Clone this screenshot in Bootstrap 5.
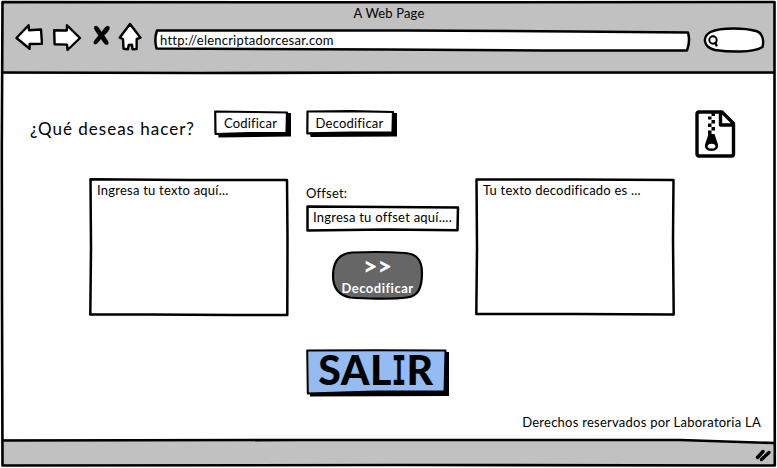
<!DOCTYPE html>
<html lang="es">
<head>
<meta charset="utf-8">
<meta name="viewport" content="width=device-width, initial-scale=1">
<title>A Web Page</title>
<link href="https://cdn.jsdelivr.net/npm/bootstrap@5.3.0/dist/css/bootstrap.min.css" rel="stylesheet">
<style>
  body { font-family: Lato, "Open Sans", sans-serif; font-size: 13px; line-height: 16px; color: #000; }
  .browser { width: 777px; height: 468px; background: #fff; }
  .chrome { background: #c1c1c1; height: 72px; margin: 2px 2px 0 3px; }
  .statusbar { background: #c1c1c1; height: 27px; margin: 0 3px 2px 3px; }
  .ink { position: absolute; left: 0; top: 0; fill: none; stroke: #000; stroke-linejoin: round; stroke-linecap: round; pointer-events: none; overflow: visible; }
  .page-title { padding-top: 3px; letter-spacing: .15px; }
  .toolbar { height: 33px; padding-left: 12px; margin-top: 1px; }
  .icon { fill: #fff; stroke: #000; stroke-width: 2.4; stroke-linejoin: round; stroke-linecap: round; flex: none; }
  .address { width: 537px; height: 32px; margin-left: 12px; }
  .address > span { padding: 10px 0 0 6px; letter-spacing: .22px; }
  .finder { margin-left: 12px; }
  .content { height: 367px; padding: 36px 0 0 30px; }
  .actions { height: 68px; }
  .question { font-size: 17px; line-height: 20px; width: 184px; padding-top: 9px; letter-spacing: 1px; white-space: nowrap; }
  .sketch-btn { background: none; border: 0; border-radius: 0; padding: 0; color: #000; font-size: 13px; line-height: 16px; }
  .choice { height: 28px; padding-bottom: 2px; letter-spacing: .2px; }
  .choice-a { width: 77px; padding-right: 4px; margin-right: 15px; }
  .choice-b { width: 91px; padding-right: 4px; }
  .zip { margin-left: 298px; }
  .workspace { height: 171px; margin-left: 59px; }
  .pane { width: 200px; height: 138px; }
  .pane textarea { resize: none; width: 200px; height: 138px; padding: 4px 8px; font-size: 13px; line-height: 16px; letter-spacing: .23px; color: #000; }
  .middle { width: 153px; margin: 0 16px 0 17px; }
  .middle label { padding-top: 7px; line-height: 16px; height: 27px; letter-spacing: .2px; }
  .offset-box { height: 27px; }
  .offset-box input { height: 27px; padding: 0 0 3px 7px; font-size: 13px; letter-spacing: .24px; color: #000; }
  .go { width: 91px; height: 49px; margin-top: 19px; margin-left: 26px; color: #fff; font-weight: 700; letter-spacing: .5px; }
  .go .arrows { font-size: 25px; line-height: 24px; height: 29px; padding-top: 2px; font-weight: 900; letter-spacing: 0; }
  .exit { width: 143px; height: 48px; margin-left: 276px; font-size: 41px; line-height: 41px; font-weight: 900; padding: 0 3px 5px 0; letter-spacing: .4px; white-space: nowrap; }
  .slab { display: inline-block; font-family: "DejaVu Sans Mono", monospace; font-size: 40px; font-weight: 700; letter-spacing: 0; transform: scaleX(.6); margin: 0 -4.6px; }
  .rights { padding: 17px 16px 0 0; letter-spacing: .25px; }
</style>
</head>
<body>
<div class="browser position-relative overflow-hidden d-flex flex-column">
  <header class="chrome">
    <div class="page-title text-center">A Web Page</div>
    <nav class="toolbar d-flex">
      <svg class="icon" width="28" height="32"><path d="M1.5 16 L13.5 3.2 L14 8.2 L26 7.5 L27 21.700 L14.600 22 L14.600 26.700 Z"/></svg>
      <svg class="icon ms-2" width="32" height="32"><path d="M3.200 8.300 L15.800 8.500 L16 3.300 L29 16 L16.500 28 L16 22.600 L3.600 22.200 Z"/></svg>
      <svg class="icon ms-2" width="27" height="32"><path d="M3.500 4.500 Q5.500 3 7.500 5.500 L10.500 10 L14 5.500 Q16.500 3 18.500 5 Q19 7 17 9.500 L13.200 13.500 L16.500 18.500 Q18.500 22 16 22.800 Q14 23 12.500 20.500 L10 17 L7 20.500 Q4.500 23.200 3 21.800 Q2 20.500 3.500 18.500 L7.500 13.500 L4.200 8.500 Q2.500 6 3.500 4.500 Z" fill="#000" stroke-width=".3"/></svg>
      <svg class="icon" width="24" height="32"><path d="M12 2 L22.500 15.700 L18.700 17 L18.600 27 L14.500 27.200 L14 22.800 L10.700 23 L10 27.200 L5.500 26.800 L5 17 L1.600 15.700 Z"/></svg>
      <div class="address position-relative d-flex">
        <svg class="ink" width="537" height="32" stroke-width="2.5"><path fill="#fff" d="M3 8.5 L250 8.500 L420 9.500 L534 10.600 Q536.5 19 533 28.500 L390 28.500 L230 27.500 L2.5 26.500 Q0 17 3 8.500 Z"/></svg>
        <span class="position-relative">http://elencriptadorcesar.com</span>
      </div>
      <svg class="icon finder" width="63" height="33"><path d="M7.500 10 C18 5 43 6 53 9 C60 11 61 19 59.500 25 C50 31 26 30 12 28 C0 25 -1 15 7.500 10 Z"/><circle cx="10" cy="18" r="3.700" fill="none" stroke-width="2"/><path d="M12.500 21 L13.500 23.500"/></svg>
    </nav>
  </header>
  <main class="content">
    <div class="actions d-flex">
      <div class="question">¿Qué deseas hacer?</div>
      <button class="sketch-btn choice choice-a position-relative"><svg class="ink" width="77" height="28"><path fill="#000" stroke="none" d="M4 22 L73 21 L72 3 L77 3 L77 26.5 L4.5 27.5 Z"/><path fill="#fff" stroke-width="2.2" d="M1.2 1.5 L40 2 L73 2.5 L72.5 23 L35 23 L1.5 24 Z"/></svg><span class="position-relative">Codificar</span></button>
      <button class="sketch-btn choice choice-b position-relative"><svg class="ink" width="91" height="28"><path fill="#000" stroke="none" d="M4 22 L86 21 L86 3 L91 3 L91 26.5 L4.5 27 Z"/><path fill="#fff" stroke-width="2.2" d="M1.5 1.5 L45 1.2 L87 2 L86.5 22.5 L45 22.5 L1.3 23.4 Z"/></svg><span class="position-relative">Decodificar</span></button>
      <svg class="zip" width="42" height="49" viewBox="0 0 42 49"><path d="M2 4 Q2 2 4 2 L27 2 L38.500 13.5 L38.500 44 Q38.500 46 37 46 L4 46 Q2 46 2 44 Z M25.500 2 V15 H38" fill="none" stroke="#000" stroke-width="3.4" stroke-linejoin="round"/><path d="M16.500 3h3.500v3h-3.500z M13 6.500h3.500v3h-3.500z M16.500 10h3.500v3.500h-3.500z M13 13.500h3.500v3.500h-3.500z M16.500 17h3.500v3.500h-3.500z M13 20.500h3.500v4h-3.500z"/><path fill-rule="evenodd" d="M13.500 24 H19.500 L23 34.500 Q24 41 16.500 41 Q9 41 10 34.500 Z M16.500 33.800 A4 2.400 0 1 0 16.600 33.800 Z"/></svg>
    </div>
    <div class="workspace d-flex align-items-start">
      <div class="pane position-relative">
        <svg class="ink" width="200" height="138" stroke-width="2.5"><path fill="#fff" d="M1.5 1.3 L100 2 L198 2 L198.5 60 L198.300 137 L145 137 L60 136.500 L1.300 136.500 L2 70 Z"/></svg>
        <textarea class="form-control position-relative border-0 bg-transparent rounded-0 overflow-hidden">Ingresa tu texto aquí...</textarea>
      </div>
      <div class="middle">
        <label class="d-block">Offset:</label>
        <div class="offset-box position-relative">
          <svg class="ink" width="153" height="27" stroke-width="2.5"><path fill="#fff" d="M1.500 1.500 L80 2 L152 2.500 L151.500 25.200 L80 24.500 L1.500 25.500 Z"/></svg>
          <input class="form-control position-relative border-0 bg-transparent rounded-0" value="Ingresa tu offset aquí....">
        </div>
        <button class="sketch-btn go position-relative d-flex flex-column align-items-center">
          <svg class="ink" width="91" height="49" stroke-width="2.2"><path fill="#666" d="M20 1.500 C38 .8 60 1 73 2 C84 3 90 8 90 22 C90 39 85 45 75 46.500 C60 48.500 30 47.500 18 46.500 C6 44 1 37 1 25 C1 9 8 2.500 20 1.500 Z"/></svg>
          <span class="arrows position-relative">&gt;&gt;</span>
          <span class="position-relative">Decodificar</span>
        </button>
      </div>
      <div class="pane position-relative">
        <svg class="ink" width="200" height="138" stroke-width="2.5"><path fill="#fff" d="M1.500 1.500 L100 1.500 L198.500 2 L198 60 L198.700 136.500 L100 136 L1.300 136 L2 70 Z"/></svg>
        <textarea class="form-control position-relative border-0 bg-transparent rounded-0 overflow-hidden">Tu texto decodificado es ...</textarea>
      </div>
    </div>
    <button class="sketch-btn exit position-relative d-block">
      <svg class="ink" width="143" height="48"><path fill="#000" stroke="none" d="M4 42 L138 42 L138 3 L143 3 L143 47 L4 47.500 Z"/><path fill="#95bcf2" stroke-width="2" d="M1.200 1.500 L70 1.200 L139.500 1.500 L138.500 42.500 L70 42.500 L1.800 44.500 Z"/></svg>
      <span class="position-relative">SAL<span class="slab">I</span>R</span>
    </button>
    <div class="rights text-end">Derechos reservados por Laboratoria LA</div>
  </main>
  <footer class="statusbar"></footer>
  <svg class="ink" width="777" height="468" stroke-width="2.600">
    <path fill="#fff" stroke="none" d="M600 438.500 L690 439.500 L774 443 L774 438 Z"/>
    <path d="M2.500 2 L400 2.300 L774.500 2 L774.500 200 L774.800 465.500 L400 465 L2.500 465.500 L2 300 L1.800 150 Z"/>
    <path d="M3 72.500 L200 73 L400 72.500 L774 72.500 M3 440.500 L300 440 L680 440 L774 443"/>
    <path stroke-width="3.400" d="M757.500 457.500 L763 451.500 M761.500 459.500 L769 452.500"/>
  </svg>
</div>
</body>
</html>
